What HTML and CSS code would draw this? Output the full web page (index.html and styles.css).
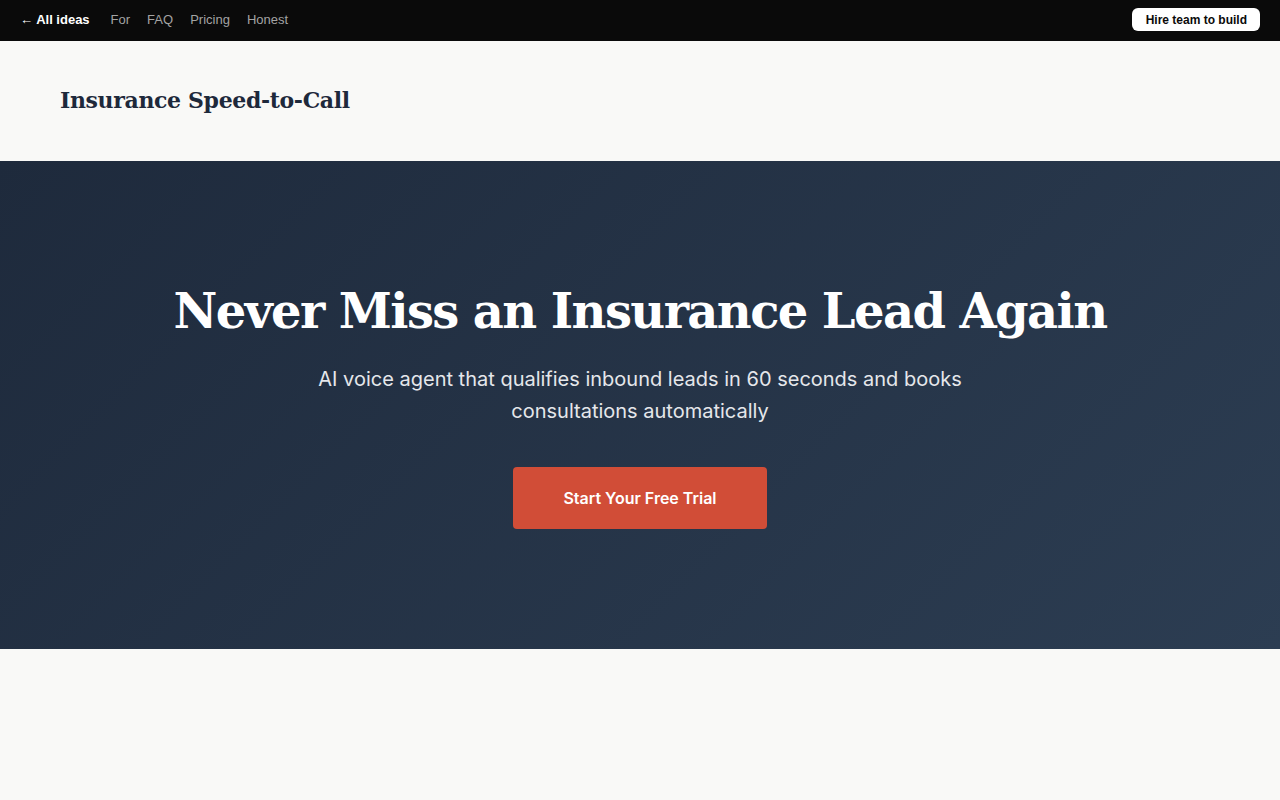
FILE: index.html
```html
<!DOCTYPE html>
<html lang="en">
<head>
<meta charset="utf-8">
<title>Insurance Speed-to-Call</title>
<link rel="stylesheet" href="styles.css">
</head>
<body>
<nav class="topbar">
  <div class="topbar-links">
    <a class="back" href="#">← All ideas</a>
    <a href="#">For</a>
    <a href="#">FAQ</a>
    <a href="#">Pricing</a>
    <a href="#">Honest</a>
  </div>
  <a class="hire" href="#">Hire team to build</a>
</nav>
<header class="site-header">
  <h2 class="brand">Insurance Speed-to-Call</h2>
</header>
<section class="hero">
  <h1 class="hero-title">Never Miss an Insurance Lead Again</h1>
  <p class="hero-sub">AI voice agent that qualifies inbound leads in 60 seconds and books consultations automatically</p>
  <a class="cta" href="#">Start Your Free Trial</a>
</section>
</body>
</html>
```
FILE: styles.css
```css
* { box-sizing: border-box; }
body {
  margin: 0;
  background: #f9f9f7;
  font-family: "Inter", "Liberation Sans", sans-serif;
}
a { text-decoration: none; }

.topbar {
  height: 41px;
  background: #0a0a0a;
  display: flex;
  align-items: center;
  justify-content: space-between;
  padding: 0 20px 2px;
  font-family: "Liberation Sans", Arial, sans-serif;
  font-size: 13px;
}
.topbar-links { display: flex; align-items: center; gap: 17px; }
.topbar-links a { color: #a3a3a3; }
.topbar-links a.back { color: #ffffff; font-weight: 700; margin-right: 4px; }
.hire {
  background: #ffffff;
  color: #0a0a0a;
  font-weight: 700;
  font-size: 12px;
  line-height: 14px;
  padding: 5px 13px 4px 14px;
  border-radius: 6px;
}

.site-header {
  height: 120px;
  display: flex;
  align-items: center;
  padding: 0 60px 2px;
}
.brand {
  margin: 0;
  font-family: "DejaVu Serif", serif;
  font-size: 22px;
  font-weight: 700;
  color: #1e293b;
  letter-spacing: -0.35px;
}

.hero {
  height: 488px;
  background: linear-gradient(135deg, #1e2a3c 0%, #2c3d52 100%);
  display: flex;
  flex-direction: column;
  align-items: center;
  justify-content: center;
  text-align: center;
  padding-top: 2px;
}
.hero-title {
  margin: 0 0 23px;
  font-family: "DejaVu Serif", serif;
  font-size: 48px;
  font-weight: 700;
  color: #ffffff;
  letter-spacing: -1.6px;
  line-height: 1.2;
}
.hero-sub {
  margin: 0 0 40px;
  max-width: 700px;
  font-size: 20px;
  line-height: 32px;
  color: #e5e7eb;
}
.cta {
  display: inline-flex;
  align-items: center;
  justify-content: center;
  width: 254px;
  height: 62px;
  background: #d14d37;
  color: #ffffff;
  font-weight: 600;
  font-size: 16px;
  border-radius: 4px;
}
```
